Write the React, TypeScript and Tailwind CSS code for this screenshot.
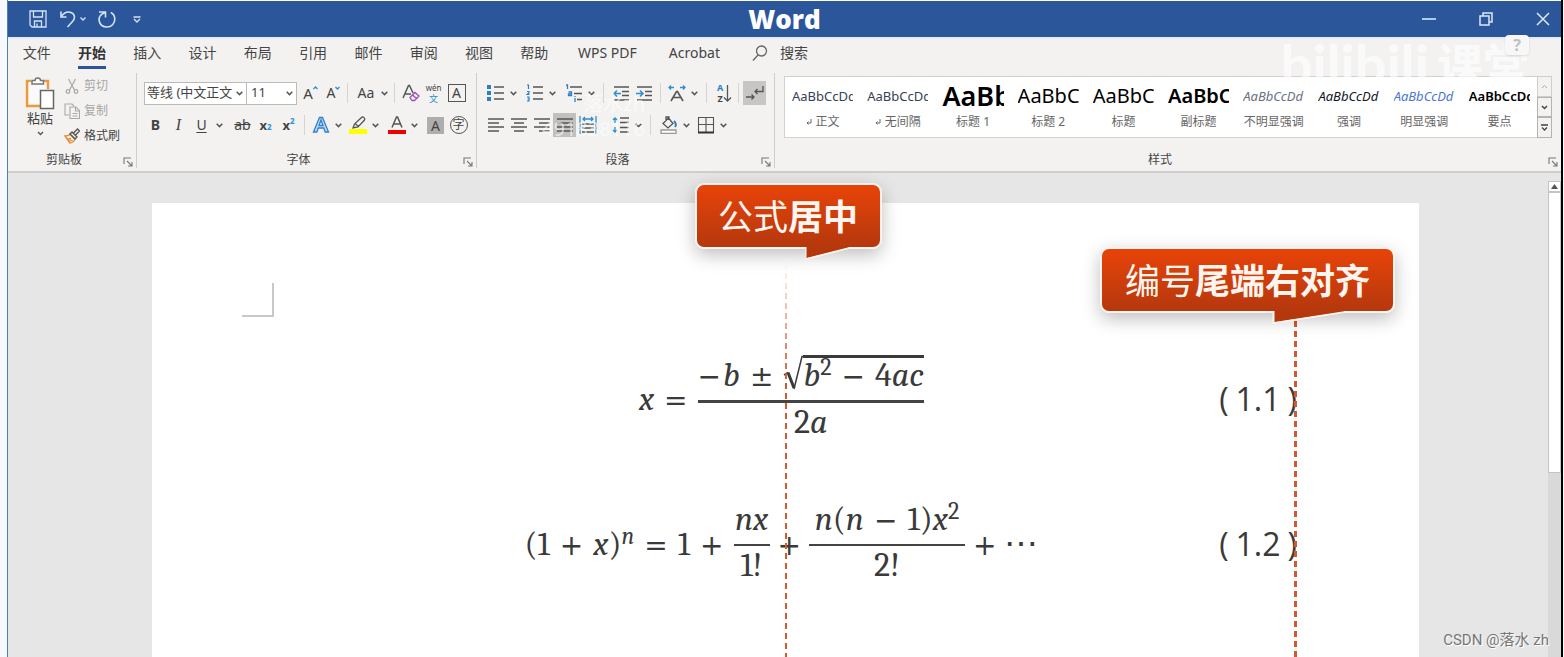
import React from 'react';
import clsx from 'clsx';

const TABS = ['文件', '开始', '插入', '设计', '布局', '引用', '邮件', '审阅', '视图', '帮助'];

const STYLES = [
  { name: '正文', sample: 'AaBbCcDd', mark: true, look: 'text-[13px] text-gray-700' },
  { name: '无间隔', sample: 'AaBbCcDd', mark: true, look: 'text-[13px] text-gray-700' },
  { name: '标题 1', sample: 'AaBbC', mark: false, look: 'text-[27px] font-semibold text-black' },
  { name: '标题 2', sample: 'AaBbCc', mark: false, look: 'text-[20px] text-black' },
  { name: '标题', sample: 'AaBbCc', mark: false, look: 'text-[20px] text-black' },
  { name: '副标题', sample: 'AaBbCc', mark: false, look: 'text-[20px] font-semibold text-black' },
  { name: '不明显强调', sample: 'AaBbCcDd', mark: false, look: 'text-[13px] italic text-gray-500' },
  { name: '强调', sample: 'AaBbCcDd', mark: false, look: 'text-[13px] italic text-gray-900' },
  { name: '明显强调', sample: 'AaBbCcDd', mark: false, look: 'text-[13px] italic text-[#4a78cf]' },
  { name: '要点', sample: 'AaBbCcDd', mark: false, look: 'text-[13px] font-semibold text-black' },
];

interface IconProps {
  size?: number;
  color?: string;
  children: React.ReactNode;
}

const Icon: React.FC<IconProps> = ({ size = 18, color = '#555', children }) => (
  <svg width={size} height={size} viewBox={`0 0 ${size} ${size}`} fill="none" stroke={color} strokeWidth="1.3" className="shrink-0">
    {children}
  </svg>
);

interface ToolProps {
  label: string;
  className?: string;
  children: React.ReactNode;
}

const Tool: React.FC<ToolProps> = ({ label, className = 'w-[23px]', children }) => (
  <button aria-label={label} className={clsx('h-6 shrink-0 flex items-center justify-center text-[#444]', className)}>
    {children}
  </button>
);

const Caret: React.FC<{ label: string }> = ({ label }) => (
  <button aria-label={label} className="w-3 h-6 shrink-0 flex items-center justify-center">
    <svg width="7" height="5" viewBox="0 0 7 5" fill="none" stroke="#555" strokeWidth="1.5">
      <path d="M0.7 0.8 3.5 3.6 6.3 0.8" />
    </svg>
  </button>
);

const Sep: React.FC<{ className?: string }> = ({ className = 'mx-1' }) => (
  <div className={clsx('w-px h-5 shrink-0 bg-[#d6d4d2]', className)} />
);

interface GroupProps {
  title: string;
  className?: string;
  children: React.ReactNode;
}

const Group: React.FC<GroupProps> = ({ title, className, children }) => (
  <section className={clsx('h-[95px] flex flex-col justify-between border-[#cfcdcb]', className)}>
    <div className="pt-1">{children}</div>
    <div className="flex items-end">
      <h3 className="flex-1 text-center text-xs leading-4 text-[#444]">{title}</h3>
      <button aria-label={`${title}设置`} className="w-4 h-3 flex items-center justify-center">
        <Icon size={10} color="#777">
          <path d="M1 7V1h7M4 4l5 5M9 5v4H5" strokeWidth="1.1" />
        </Icon>
      </button>
    </div>
  </section>
);

const TitleBar = () => (
  <header className="h-[37px] bg-[#2b579a] border-t border-white flex items-center text-white">
    <div className="flex-1 flex items-center">
      <button aria-label="保存" className="ml-[19px] w-[22px] h-6 flex items-center justify-center">
        <Icon size={18} color="#d5e2f5">
          <path d="M1 1h16v16H3l-2-2zM4.500 1v6h9V1M5.500 17v-6h7v6M8 13.500V17" />
        </Icon>
      </button>
      <button aria-label="撤销" className="ml-2 w-[22px] h-6 flex items-center justify-center">
        <Icon size={18} color="#d5e2f5">
          <path d="M2 1.500V7h5.500M2 7C5 2.500 9 1.500 12 2.500c4 1.500 4.500 6 1.500 9L8.500 17" strokeWidth="1.6" />
        </Icon>
      </button>
      <button aria-label="撤销列表" className="w-2 h-6 flex items-center justify-center">
        <svg width="6" height="4" viewBox="0 0 6 4" fill="none" stroke="#d5e2f5" strokeWidth="1.3"><path d="M0.500 0.500 3 3 5.500 0.500" /></svg>
      </button>
      <button aria-label="恢复" className="ml-2 w-6 h-6 flex items-center justify-center">
        <Icon size={20} color="#d5e2f5">
          <path d="M2 3h6.500v5.500M8.500 3.500C3.500 5 1.500 8.500 2.200 12c.8 4 4 6 7.800 6 4.500 0 7.800-3.500 7.800-8 0-3-1.500-5.200-4-6.500" strokeWidth="1.6" />
        </Icon>
      </button>
      <button aria-label="自定义快速访问工具栏" className="ml-2 w-5 h-6 flex items-center justify-center">
        <svg width="8" height="7" viewBox="0 0 8 7" fill="none" stroke="#d5e2f5" strokeWidth="1.4"><path d="M0.500 1h7M1 3 4 6 7 3" /></svg>
      </button>
    </div>
    <h1 className="text-[26px] leading-8 font-extrabold font-['Open_Sans','Liberation_Sans',sans-serif]">Word</h1>
    <div className="flex-1 flex items-center justify-end">
      <button aria-label="最小化" className="w-6 h-6 flex items-center justify-center">
        <Icon size={14} color="#a9cdf7"><path d="M0 7h14" strokeWidth="2" /></Icon>
      </button>
      <button aria-label="还原" className="ml-[33px] w-6 h-6 flex items-center justify-center">
        <Icon size={14} color="#dce8f8"><path d="M1 4h9v9H1zM4 4V1h9v9h-3" strokeWidth="1.5" /></Icon>
      </button>
      <button aria-label="关闭" className="ml-[33px] mr-1.5 w-6 h-6 flex items-center justify-center">
        <Icon size={14} color="#dce8f8"><path d="M1 1l12 12M13 1 1 13" strokeWidth="1.5" /></Icon>
      </button>
    </div>
  </header>
);

const TabBar = () => (
  <nav className="h-[33px] pl-px flex items-start text-sm leading-[27px] text-[#444] border-t-2 border-[#e3ebf5]">
    <div className="w-[553px] flex">
      {TABS.map((tab) => (
        <button key={tab} className="flex-1 flex justify-center">
          <span className={clsx(tab === '开始' && 'font-bold text-[#333] border-b-3 border-[#2b579a]')}>{tab}</span>
        </button>
      ))}
    </div>
    <button className="ml-4">WPS PDF</button>
    <button className="ml-8">Acrobat</button>
    <button className="ml-8 flex items-center gap-3">
      <Icon size={16} color="#666">
        <circle cx="9.500" cy="6" r="5" />
        <path d="M6 10l-5 5.500" />
      </Icon>
      搜索
    </button>
  </nav>
);

const ClipboardGroup = () => (
  <Group title="剪贴板" className="w-[129px] border-r">
    <div className="flex pl-4 text-[#444]">
      <button className="w-8 flex flex-col items-center text-[13px] leading-4">
        <svg width="30" height="33" viewBox="0 0 30 33" fill="none" strokeWidth="1.5">
          <path d="M6 4H2v25h13M19 4h4v8" stroke="#eb9a3c" strokeWidth="2.400" />
          <path d="M4 5h17v8h-6v14H4z" fill="#fafafa" />
          <path d="M7 7V3.500h3C10 0 15.500 0 15.500 3.500h3V7z" fill="#fff" stroke="#777" />
          <path d="M15.500 13.500h13v18h-13z" fill="#fff" stroke="#666" />
        </svg>
        <span>粘贴</span>
        <svg width="7" height="14" viewBox="0 0 7 14" fill="none" stroke="#555" strokeWidth="1.400"><path d="M1 6l2.500 2.500L6 6" /></svg>
      </button>
      <div className="ml-2 -mt-1 flex flex-col text-xs">
        <button className="flex items-center gap-1 h-[25px] text-[#a8a6a4]" disabled>
          <Icon size={16} color="#aaa">
            <path d="M4.500 1l6 11M11.500 1l-6 11" />
            <circle cx="4" cy="13.500" r="1.800" />
            <circle cx="12" cy="13.500" r="1.800" />
          </Icon>
          剪切
        </button>
        <button className="flex items-center gap-1 h-[25px] text-[#a8a6a4]" disabled>
          <Icon size={16} color="#aaa">
            <path d="M5 12H1V1h7l2 2M6 4h6l3.500 3.500V15.500H6zM11.500 4v4h4M8.500 10.500h5M8.500 13h5" strokeWidth="1.100" />
          </Icon>
          复制
        </button>
        <button className="flex items-center gap-1 h-[25px]">
          <Icon size={16}>
            <path d="M1 8l5 7c3 0 4-2 5-4L6 6c-1 2-3 2-5 2z" stroke="#e08a32" fill="#fdf0e0" />
            <path d="M3 11.500l4-1M4.500 13.500l4-1.500" stroke="#e08a32" />
            <path d="M6 6l2-2 5 5-2 2zM9.500 5l4-4 2 2-4 4" strokeWidth="1.400" />
          </Icon>
          格式刷
        </button>
      </div>
    </div>
  </Group>
);

const FontGroup = () => (
  <Group title="字体" className="w-[340px] border-r">
    <div className="flex items-center h-8 pl-[7px]">
      <select aria-label="字体" className="w-[103px] h-[23px] pl-[2px] appearance-none border border-[#bbb] bg-white text-[13px] text-[#444]">
        <option>等线 (中文正文</option>
      </select>
      <div className="-ml-4 w-4 flex justify-center pointer-events-none">
        <svg width="7" height="5" viewBox="0 0 7 5" fill="none" stroke="#555" strokeWidth="1.500"><path d="M0.700 0.800 3.500 3.600 6.300 0.800" /></svg>
      </div>
      <select aria-label="字号" className="-ml-px w-[51px] h-[23px] pl-1 appearance-none border border-[#bbb] bg-white text-[13px] text-[#444]">
        <option>11</option>
      </select>
      <div className="-ml-4 w-4 flex justify-center pointer-events-none">
        <svg width="7" height="5" viewBox="0 0 7 5" fill="none" stroke="#555" strokeWidth="1.500"><path d="M0.700 0.800 3.500 3.600 6.300 0.800" /></svg>
      </div>
      <Tool label="增大字号" className="ml-0.5 w-[23px] text-[15px]">
        A<svg width="5" height="14" viewBox="0 0 5 14" fill="none" stroke="#2b8fd0" strokeWidth="1.300"><path d="M0.500 3 2.500 1 4.500 3" /></svg>
      </Tool>
      <Tool label="减小字号" className="w-[23px] text-sm">
        A<svg width="5" height="14" viewBox="0 0 5 14" fill="none" stroke="#2b8fd0" strokeWidth="1.300"><path d="M0.500 1 2.500 3 4.500 1" /></svg>
      </Tool>
      <Sep className="mx-0.5" />
      <Tool label="更改大小写" className="w-7 pl-1 text-sm">Aa</Tool>
      <Caret label="大小写选项" />
      <Sep />
      <Tool label="清除格式">
        <Icon>
          <path d="M1 14 6.500 1.500h1L11 9M3 10h6" strokeWidth="1.500" />
          <path d="M8 13.500l5-5 4 3.500-4.500 4.500H10zM10.500 11l4 3.500" stroke="#9b4fb0" />
        </Icon>
      </Tool>
      <Tool label="拼音指南">
        <span className="flex flex-col items-center text-[8px] leading-[11px]">
          wén<span className="text-[9px] leading-[12px] text-[#2b8fd0]">文</span>
        </span>
      </Tool>
      <Tool label="字符边框">
        <span className="size-[18px] border border-[#555] text-sm leading-4">A</span>
      </Tool>
    </div>
    <div className="flex items-center h-8 pl-[7px] text-sm">
      <Tool label="加粗"><b>B</b></Tool>
      <Tool label="倾斜"><i className="font-['Liberation_Serif',serif] text-base">I</i></Tool>
      <Tool label="下划线"><u className="underline-offset-2">U</u></Tool>
      <Caret label="下划线样式" />
      <Tool label="删除线" className="ml-1.5 w-[23px]"><s>ab</s></Tool>
      <Tool label="下标"><b className="text-[13px]">x</b><sub className="text-[8px] font-bold text-[#2b8fd0]">2</sub></Tool>
      <Tool label="上标"><b className="text-[13px]">x</b><sup className="text-[8px] font-bold text-[#2b8fd0]">2</sup></Tool>
      <Sep />
      <Tool label="文本效果">
        <Icon color="#2f80c8">
          <path d="M1.500 16 7.500 1.500h3L16.500 16h-3.300l-1.400-4H6.200l-1.400 4zM7 9.500h4L9 4z" fill="#bcdcf5" />
        </Icon>
      </Tool>
      <Caret label="文本效果选项" />
      <Tool label="突出显示" className="ml-0.5 w-[23px]">
        <Icon>
          <path d="M0 13h18v5H0z" fill="#ffff00" stroke="none" />
          <path d="M4 12l1.500-4 7-6.500c1.500-1.500 4 1 3 2.500L9 11zM6 7.500l3.500 3" />
        </Icon>
      </Tool>
      <Caret label="突出显示颜色" />
      <Tool label="字体颜色" className="ml-1 w-[23px]">
        <Icon>
          <path d="M0 14h18v4H0z" fill="#f00000" stroke="none" />
          <path d="M4 11.500 8.500 1h1L14 11.500M5.500 8h7" strokeWidth="1.500" />
        </Icon>
      </Tool>
      <Caret label="字体颜色选项" />
      <Tool label="字符底纹" className="ml-1 w-[23px]">
        <span className="size-[17px] bg-[#b0aeac] leading-[17px]">A</span>
      </Tool>
      <Tool label="带圈字符">
        <span className="size-[18px] rounded-full border border-[#555] text-xs leading-4">字</span>
      </Tool>
    </div>
  </Group>
);

const ParagraphGroup = () => (
  <Group title="段落" className="relative w-[298px] border-r">
    <div className="flex items-center h-8 pl-[7px]">
      <Tool label="项目符号">
        <Icon>
          <path d="M0 1h4v4H0zM0 7h4v4H0zM0 13h4v4H0z" fill="#2b7fc4" stroke="none" />
          <path d="M7 3h10M7 9h10M7 15h10" strokeWidth="1.600" />
        </Icon>
      </Tool>
      <Caret label="项目符号库" />
      <Tool label="编号" className="ml-1 w-[23px]">
        <Icon>
          <path d="M1 1h1.500v4M1 7.500h2V9L1 10.500h2.500M1 13h2v2H1.500H3v2H1" stroke="#2b7fc4" strokeWidth="1.200" />
          <path d="M7 3h10M7 9h10M7 15h10" strokeWidth="1.600" />
        </Icon>
      </Tool>
      <Caret label="编号库" />
      <Tool label="多级列表" className="ml-1 w-[23px]">
        <Icon>
          <path d="M1 1h1.500v4M3.500 8h3v3.500h-3V9.800h3M10 14v4M10 12v1" stroke="#2b7fc4" strokeWidth="1.300" />
          <path d="M5 3h12M9 9.500h8M12 15.500h5" strokeWidth="1.600" />
        </Icon>
      </Tool>
      <Caret label="列表库" />
      <Sep className="mx-1.5" />
      <Tool label="减少缩进量">
        <Icon size={17}>
          <path d="M1 2h15M9 6.500h7M9 10.500h7M1 15h15" strokeWidth="1.600" />
          <path d="M8 8.500H1M4 5.500l-3 3 3 3" stroke="#2b8fd0" strokeWidth="1.500" />
        </Icon>
      </Tool>
      <Tool label="增加缩进量">
        <Icon size={17}>
          <path d="M1 2h15M9 6.500h7M9 10.500h7M1 15h15" strokeWidth="1.600" />
          <path d="M0 8.500h7M4 5.500l3 3-3 3" stroke="#2b8fd0" strokeWidth="1.500" />
        </Icon>
      </Tool>
      <Sep />
      <Tool label="中文版式">
        <Icon>
          <path d="M3 17 8.500 7.500h1L15 17M5.500 13.500h7" strokeWidth="1.600" />
          <path d="M1 3.500h5M3 1.500l-2 2 2 2M12 3.500h5M15 1.500l2 2-2 2" stroke="#2b8fd0" />
        </Icon>
      </Tool>
      <Caret label="中文版式选项" />
      <Sep className="mx-1.5" />
      <Tool label="排序">
        <span className="flex flex-col text-[9px] font-bold leading-[11px]">
          <span className="text-[#2b7fc4]">A</span>Z
        </span>
        <svg width="9" height="17" viewBox="0 0 9 17" fill="none" stroke="#555" strokeWidth="1.300"><path d="M4.500 0v16M1 12.500 4.500 16 8 12.500" /></svg>
      </Tool>
      <Sep className="mx-0.5" />
      <Tool label="显示编辑标记" className="ml-0.5 w-[23px] bg-[#c8c6c4]">
        <Icon>
          <path d="M0 13h8M5.500 10.500 8 13l-2.500 2.500M17 2v5.500H9M11.500 5 9 7.500l2.500 2.500" />
        </Icon>
      </Tool>
    </div>
    <div className="flex items-center h-8 pl-[7px]">
      <Tool label="左对齐"><Icon size={16}><path d="M0 2h16M0 6h11M0 10h16M0 14h11" strokeWidth="1.400" /></Icon></Tool>
      <Tool label="居中"><Icon size={16}><path d="M0 2h16M3 6h10M0 10h16M3 14h10" strokeWidth="1.400" /></Icon></Tool>
      <Tool label="右对齐"><Icon size={16}><path d="M0 2h16M5 6h11M0 10h16M5 14h11" strokeWidth="1.400" /></Icon></Tool>
      <Tool label="两端对齐" className="w-[23px] bg-[#c2c0be]"><Icon size={16}><path d="M0 2h16M0 6h16M0 10h16M0 14h16" strokeWidth="1.500" /></Icon></Tool>
      <Tool label="分散对齐">
        <Icon>
          <path d="M1 0v18M17 0v18M4 3h10M6 1 4 3l2 2M12 1l2 2-2 2" stroke="#2b8fd0" />
          <path d="M3 8h12M3 12h12M3 16h12" strokeWidth="1.600" />
        </Icon>
      </Tool>
      <Tool label="行和段落间距" className="ml-2.5 w-[23px]">
        <Icon>
          <path d="M3 2v5M1 4l2-2 2 2M3 11v5M1 14l2 2 2-2" stroke="#2b8fd0" />
          <path d="M8 2h9M8 6.500h9M8 11.500h9M8 16h9" strokeWidth="1.400" />
        </Icon>
      </Tool>
      <Caret label="间距选项" />
      <Sep className="mx-1.5" />
      <Tool label="底纹">
        <Icon>
          <path d="M3 7.500 8.500 2l4.500 5.500-5 4.500zM6 5V1h3v3" />
          <path d="M14 5c2 2 2.500 4 1 6" stroke="#2b7fc4" strokeWidth="2" />
          <path d="M1 14h15v3.500H1z" fill="#fff" stroke="#999" />
        </Icon>
      </Tool>
      <Caret label="底纹颜色" />
      <Tool label="边框" className="ml-0.5 w-[23px]">
        <Icon>
          <path d="M1.500 16V1.500h15V16M9 2v14M2 8.500h14" strokeWidth="1.100" />
          <path d="M1 16.500h16" strokeWidth="2" stroke="#333" />
        </Icon>
      </Tool>
      <Caret label="边框选项" />
    </div>
    <div className="absolute left-[58px] top-[18px] w-[110px] text-right text-xl leading-[25px] text-white/60 pointer-events-none">
      落水zh<br />491838116
    </div>
  </Group>
);

const StylesGroup = () => (
  <Group title="样式" className="flex-1 min-w-0">
    <div className="ml-[9px] mr-[9px] -mt-px h-[62px] flex bg-white border border-[#d4d2d0]">
      <div className="flex-1 min-w-0 flex">
        {STYLES.map((style) => (
          <button key={style.name} className="flex-1 min-w-0 px-[7px] flex flex-col">
            <span className={clsx('w-full h-9 pt-px leading-9 text-left overflow-hidden whitespace-nowrap', style.look)}>
              {style.sample}
            </span>
            <span className="w-full text-center text-xs leading-[18px] text-[#666] whitespace-nowrap flex justify-center items-center gap-1">
              {style.mark && (
                <svg width="6" height="6" viewBox="0 0 6 6" fill="none" stroke="#666"><path d="M5 0v4H1M2.500 2.500 1 4l1.500 1.500" /></svg>
              )}
              {style.name}
            </span>
          </button>
        ))}
      </div>
      <div className="w-[15px] -my-px -mr-px flex flex-col">
        <button aria-label="上一行" className="flex-1 border border-[#d0cecc] bg-[#f3f2f1] flex items-center justify-center">
          <svg width="7" height="5" viewBox="0 0 7 5" fill="none" stroke="#aaa"><path d="M1 4 3.500 1.500 6 4" /></svg>
        </button>
        <button aria-label="下一行" className="flex-1 border border-[#b5b3b1] bg-[#f3f2f1] flex items-center justify-center">
          <svg width="7" height="5" viewBox="0 0 7 5" fill="none" stroke="#444" strokeWidth="1.500"><path d="M1 1 3.500 3.500 6 1" /></svg>
        </button>
        <button aria-label="其他样式" className="flex-1 border border-[#b5b3b1] bg-[#f3f2f1] flex items-center justify-center">
          <svg width="7" height="7" viewBox="0 0 7 7" fill="none" stroke="#444" strokeWidth="1.300"><path d="M0 1h7M1 3.500 3.500 6 6 3.500" /></svg>
        </button>
      </div>
    </div>
  </Group>
);

interface CalloutProps {
  light: string;
  bold: string;
  className: string;
  tail: string;
}

const Callout: React.FC<CalloutProps> = ({ light, bold, className, tail }) => (
  <div className={clsx('absolute h-[66px] rounded-[9px] border-2 border-[#fdf3ee] bg-linear-to-b from-[#e84308] to-[#b5380d] text-[#fff5ef] text-[35px] leading-[64px] text-center whitespace-nowrap shadow-[0_6px_18px_rgba(0,0,0,0.25)]', className)}>
    {light}<b>{bold}</b>
    <svg width="76" height="16" viewBox="0 0 76 16" preserveAspectRatio="none" className={clsx('absolute top-[61px] h-[15px]', tail)}>
      <path d="M1.500 0v13L72 2V0z" fill="#b5380d" />
      <path d="M1.500 1v13L74 2" stroke="#fdf3ee" strokeWidth="2" fill="none" />
    </svg>
  </div>
);

const Op: React.FC<{ className?: string; children: React.ReactNode }> = ({ className = 'mx-2.5', children }) => (
  <span className={clsx("text-[28px] leading-4 font-['DejaVu_Sans',sans-serif]", className)}>{children}</span>
);

const Sup: React.FC<{ children: React.ReactNode }> = ({ children }) => (
  <span className="text-2xl leading-4 align-[11px]">{children}</span>
);

interface FractionProps {
  top: React.ReactNode;
  bottom: React.ReactNode;
  className?: string;
  bar?: string;
}

const Fraction: React.FC<FractionProps> = ({ top, bottom, className, bar = 'border-b-2' }) => (
  <span className={clsx('flex flex-col items-center', className)}>
    <span className={clsx('w-full pb-2 flex justify-center items-end border-[#444]', bar)}>{top}</span>
    <span className="pt-0.5 pb-1">{bottom}</span>
  </span>
);

const EquationRow: React.FC<{ number: string; className?: string; children: React.ReactNode }> = ({ number, className, children }) => (
  <div className={clsx('grid grid-cols-[1fr_auto_1fr] items-center pl-[114px] pr-[122px]', className)}>
    <span />
    <div className="flex items-center whitespace-nowrap text-[34px] leading-[34px] text-[#3a3a3a] font-['Cambria','Liberation_Serif',serif]">
      {children}
    </div>
    <div className="flex justify-end gap-[7px] text-[32px] leading-9 text-[#3a3a3a] font-['Open_Sans','Noto_Sans',sans-serif]">
      <span>(</span><span>{number}</span><span>)</span>
    </div>
  </div>
);

const GUIDE = 'absolute bottom-0 pointer-events-none bg-[repeating-linear-gradient(to_bottom,#d4582f_0px,#d4582f_6px,transparent_6px,transparent_10px)]';

const Page = () => (
  <main className="relative flex-1 bg-white mt-[30px]">
    <div className="ml-[90px] mt-20 w-8 h-[34px] border-r-2 border-b-2 border-[#c9c9c9]" />
    <EquationRow number="1.1" className="mt-[38px]">
      <span><i>x</i><Op>=</Op></span>
      <Fraction
        bar="border-b-3"
        top={
          <>
            <span><Op className="mr-0.5">−</Op><i>b</i><Op>±</Op></span>
            <svg width="20" height="37" viewBox="0 0 20 37" fill="none" stroke="#3a3a3a" className="shrink-0">
              <path d="M1 20l4-2.500" strokeWidth="1.500" />
              <path d="M5 17.500 11 33" strokeWidth="3" />
              <path d="M11 34 19 1.500H20" strokeWidth="1.500" />
            </svg>
            <span className="border-t-3 border-[#3a3a3a]">
              <i>b</i><Sup>2</Sup><Op>−</Op>4<i>ac</i>
            </span>
          </>
        }
        bottom={<>2<i>a</i></>}
      />
    </EquationRow>
    <EquationRow number="1.2" className="mt-[59px]">
      <span>(1<Op>+</Op><i>x</i>)<Sup><i>n</i></Sup><Op>=</Op>1<Op>+</Op></span>
      <Fraction className="w-9" top={<i>nx</i>} bottom="1!" />
      <span><Op className="mx-2">+</Op></span>
      <Fraction
        className="w-[156px]"
        top={<span><i>n</i>(<i>n</i><Op>−</Op>1)<i>x</i><Sup>2</Sup></span>}
        bottom="2!"
      />
      <span><Op className="mx-2">+</Op>⋯</span>
    </EquationRow>

    <div className={clsx(GUIDE, 'left-1/2 -ml-px top-[60px] w-0.5 mask-[linear-gradient(to_bottom,transparent,black_120px)]')} />
    <div className={clsx(GUIDE, 'right-[122px] top-[118px] w-[3px]')} />
    <Callout light="公式" bold="居中" className="left-1/2 -ml-[91px] -top-5 w-[187px]" tail="left-[108px] w-[46px]" />
    <Callout light="编号" bold="尾端右对齐" className="right-6 top-11 w-[295px]" tail="left-[170px] w-[76px]" />
  </main>
);

const App: React.FC = () => {
  return (
    <div className="min-h-screen flex bg-[#f8f9fc] pl-[7px] pr-px font-['Noto_Sans','Noto_Sans_CJK_SC',sans-serif]">
      <div className="relative flex-1 min-w-0 flex flex-col bg-[#e6e6e6] border-l border-r-2 border-l-[#4a7fb8] border-r-black">
        <TitleBar />
        <div className="bg-[#f3f2f1] border-b-2 border-[#d0cecd]">
          <TabBar />
          <div className="flex pt-[3px] pb-[3px]">
            <ClipboardGroup />
            <FontGroup />
            <ParagraphGroup />
            <StylesGroup />
          </div>
        </div>
        <div className="flex-1 flex">
          <div className="flex-1 flex flex-col pl-36 pr-[129px]">
            <Page />
          </div>
          <div className="w-[13px] mt-2 flex flex-col bg-[#d9d9d9]">
            <button aria-label="向上滚动" className="h-[11px] bg-white border border-[#c4c4c4] flex items-center justify-center">
              <svg width="7" height="5" viewBox="0 0 7 5" fill="#555"><path d="M0 5 3.500 0 7 5z" /></svg>
            </button>
            <div className="h-[281px] bg-white border border-[#c4c4c4]" />
          </div>
        </div>

        {/* overlay marks */}
        <div className="absolute right-8 top-[34px] flex items-center text-white/65 pointer-events-none">
          <span className="text-[56px] leading-[60px] font-bold font-['Lato','Liberation_Sans',sans-serif]">bilibili</span>
          <span className="ml-2 text-[46px] leading-[60px] font-bold">课堂</span>
          <span className="absolute right-0 top-px w-6 h-5 rounded-sm bg-[#f7f7f7] text-center text-base leading-5 font-bold text-[#c0c0c0] shadow">?</span>
        </div>
        <div className="absolute right-3 bottom-1.5 text-[15px] leading-[22px] text-[#777] font-['Roboto','Noto_Sans_CJK_SC',sans-serif] [text-shadow:1px_1px_0_#fff] pointer-events-none">
          CSDN @落水 zh
        </div>
      </div>
    </div>
  );
};

export default App;
